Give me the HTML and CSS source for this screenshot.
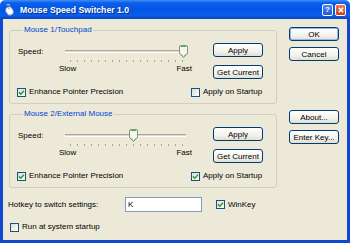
FILE: index.html
```html
<!DOCTYPE html>
<html lang="en">
<head>
  <meta charset="UTF-8">
  <title>Mouse Speed Switcher 1.0</title>
  <link rel="stylesheet" href="styles.css">
</head>
<body>
  <div class="window">
    <div class="titlebar">
      <svg class="app-icon" width="11" height="12" viewBox="0 0 11 12">
        <path d="M6 1 Q4 0 2.5 1" stroke="#dfe8ff" fill="none"/>
        <ellipse cx="5.5" cy="7" rx="3.6" ry="4.4" transform="rotate(-30 5.5 7)" fill="#ffffff" stroke="#6a7fa8" stroke-width="0.8"/>
        <path d="M4 4.2 L6.3 5.6" stroke="#8a9cc0" stroke-width="0.8"/>
      </svg>
      <span class="title">Mouse Speed Switcher 1.0</span>
      <div class="caption-btns">
        <span class="cap help">?</span>
        <span class="cap close">
          <svg width="6" height="6" viewBox="0 0 6 6"><path d="M0.8 0.8 L5.2 5.2 M5.2 0.8 L0.8 5.2" stroke="#fff" stroke-width="1.4"/></svg>
        </span>
      </div>
    </div>

    <div class="client">
      <div class="main">
        <div class="groups">
          <fieldset class="group">
            <legend>Mouse 1/Touchpad</legend>
            <div class="speed-row">
              <span class="speed-label">Speed:</span>
              <div class="slider">
                <div class="track">
                  <div class="thumb-range">
                    <span class="thumb" style="left: 100%">
                      <svg width="9" height="13" viewBox="0 0 9 13">
                        <path d="M0.5 1.5 Q0.5 0.5 1.5 0.5 H7.5 Q8.5 0.5 8.5 1.5 V8.5 L4.5 12.5 L0.5 8.5 Z" fill="#f5f4ee" stroke="#8e8e86"/>
                        <path d="M1.5 1.5 H7.5" stroke="#3cbf3c"/>
                        <path d="M1.5 8.8 L4.5 11.6 L7.5 8.8" stroke="#6fcf6f" fill="none"/>
                      </svg>
                    </span>
                  </div>
                </div>
                <div class="ticks"></div>
                <div class="scale"><span>Slow</span><span>Fast</span></div>
              </div>
              <div class="group-btns">
                <button class="btn">Apply</button>
                <button class="btn">Get Current</button>
              </div>
            </div>
            <div class="check-row">
              <label class="check first"><span class="box checked"><svg width="7" height="7" viewBox="0 0 7 7"><path d="M1 3.4 L2.8 5.2 L6 1.8" stroke="#21a121" stroke-width="1.5" fill="none"/></svg></span>Enhance Pointer Precision</label>
              <label class="check"><span class="box"></span>Apply on Startup</label>
            </div>
          </fieldset>

          <fieldset class="group second">
            <legend>Mouse 2/External Mouse</legend>
            <div class="speed-row">
              <span class="speed-label">Speed:</span>
              <div class="slider">
                <div class="track">
                  <div class="thumb-range">
                    <span class="thumb" style="left: 56.25%">
                      <svg width="9" height="13" viewBox="0 0 9 13">
                        <path d="M0.5 1.5 Q0.5 0.5 1.5 0.5 H7.5 Q8.5 0.5 8.5 1.5 V8.5 L4.5 12.5 L0.5 8.5 Z" fill="#f5f4ee" stroke="#8e8e86"/>
                        <path d="M1.5 1.5 H7.5" stroke="#3cbf3c"/>
                        <path d="M1.5 8.8 L4.5 11.6 L7.5 8.8" stroke="#6fcf6f" fill="none"/>
                      </svg>
                    </span>
                  </div>
                </div>
                <div class="ticks"></div>
                <div class="scale"><span>Slow</span><span>Fast</span></div>
              </div>
              <div class="group-btns">
                <button class="btn">Apply</button>
                <button class="btn">Get Current</button>
              </div>
            </div>
            <div class="check-row">
              <label class="check first"><span class="box checked"><svg width="7" height="7" viewBox="0 0 7 7"><path d="M1 3.4 L2.8 5.2 L6 1.8" stroke="#21a121" stroke-width="1.5" fill="none"/></svg></span>Enhance Pointer Precision</label>
              <label class="check"><span class="box checked"><svg width="7" height="7" viewBox="0 0 7 7"><path d="M1 3.4 L2.8 5.2 L6 1.8" stroke="#21a121" stroke-width="1.5" fill="none"/></svg></span>Apply on Startup</label>
            </div>
          </fieldset>
        </div>

        <div class="side-btns">
          <button class="btn default">OK</button>
          <button class="btn">Cancel</button>
          <button class="btn about">About...</button>
          <button class="btn">Enter Key...</button>
        </div>
      </div>

      <div class="hotkey-row">
        <span class="hotkey-label">Hotkey to switch settings:</span>
        <span class="textbox">K</span>
        <label class="check winkey"><span class="box checked"><svg width="7" height="7" viewBox="0 0 7 7"><path d="M1 3.4 L2.8 5.2 L6 1.8" stroke="#21a121" stroke-width="1.5" fill="none"/></svg></span>WinKey</label>
      </div>

      <label class="check run-startup"><span class="box"></span>Run at system startup</label>
    </div>
  </div>
</body>
</html>
```

FILE: styles.css
```css
* {
  box-sizing: border-box;
}

body {
  margin: 0;
  font-family: "Liberation Sans", Arial, sans-serif;
  font-size: 8px;
  background: #ffffff;
}

.window {
  width: 350px;
  height: 243px;
  display: flex;
  flex-direction: column;
}

/* title bar */
.titlebar {
  height: 19px;
  display: flex;
  align-items: center;
  padding: 0 4px 0 4px;
  border-radius: 5px 5px 0 0;
  background: linear-gradient(#3d8ffb 0, #0a5ee9 3px, #0256e6 50%, #0a5fe8 80%, #0845c8 100%);
  color: #ffffff;
}

.app-icon {
  display: block;
  margin-right: 5px;
}

.title {
  font-weight: bold;
  font-size: 8.7px;
  text-shadow: 1px 1px 0 #0a2f8a;
}

.caption-btns {
  margin-left: auto;
  display: flex;
  gap: 2px;
}

.cap {
  width: 11px;
  height: 12px;
  border: 1px solid #ffffff;
  border-radius: 2px;
  display: flex;
  align-items: center;
  justify-content: center;
  color: #ffffff;
  font-weight: bold;
  font-size: 8px;
}

.cap.help {
  background: linear-gradient(#4f8af2, #2457d8);
}

.cap.close {
  background: linear-gradient(#e77a5a, #c9401d);
}

/* client area */
.client {
  flex: 1;
  background: #ece9d8;
  border: 3px solid #1048d2;
  border-top: 0;
  padding: 6px 5px 0 6px;
}

.main {
  display: flex;
  gap: 12px;
}

.groups {
  width: 268px;
}

.group {
  margin: 0;
  min-width: 0;
  padding: 8px 13px 6px 8px;
  border: 1px solid #d0d0bf;
  border-radius: 3px;
}

.group.second {
  margin-top: 5px;
}

.group legend {
  padding: 0 1px;
  margin-left: 5px;
  line-height: 10px;
  color: #0046d5;
}

.speed-row {
  display: flex;
  align-items: flex-start;
}

.speed-label {
  width: 41px;
  margin-top: 4px;
  line-height: 10px;
}

/* slider */
.slider {
  width: 136px;
  padding-top: 7px;
}

.track {
  position: relative;
  margin: 0 9px 0 6px;
  height: 3px;
  border-top: 1px solid #a9a79c;
  border-bottom: 1px solid #ffffff;
  background: #dcdad0;
}

.thumb-range {
  position: absolute;
  left: 5px;
  right: 3px;
  top: -6px;
  height: 13px;
}

.thumb {
  position: absolute;
  top: 0;
  margin-left: -4.5px;
  width: 9px;
  height: 13px;
}

.thumb svg {
  display: block;
}

.ticks {
  margin: 7px 0 0 11px;
  width: 114px;
  height: 2px;
  background: repeating-linear-gradient(to right, #a7a59b 0 1px, transparent 1px 7px);
}

.scale {
  display: flex;
  justify-content: space-between;
  margin-top: 2px;
  padding-right: 3px;
  line-height: 10px;
}

/* buttons */
.group-btns {
  margin-left: 18px;
  display: flex;
  flex-direction: column;
  gap: 8px;
}

.btn {
  width: 50px;
  height: 14px;
  padding: 0;
  font-family: inherit;
  font-size: 8px;
  color: #000000;
  border: 1px solid #003c74;
  border-radius: 3px;
  background: linear-gradient(#ffffff, #f3f2ec 60%, #e2ded2);
}

.btn.default {
  box-shadow: inset 0 0 0 1px #98b4ec;
}

.side-btns {
  display: flex;
  flex-direction: column;
  padding-top: 2px;
  gap: 6px;
}

.side-btns .about {
  margin-top: 43px;
}

/* checkboxes */
.check-row {
  display: flex;
  margin-top: 8px;
}

.check {
  display: flex;
  align-items: center;
  gap: 3px;
  line-height: 10px;
}

.check.first {
  width: 174px;
  margin-left: -1px;
}

.box {
  width: 9px;
  height: 9px;
  border: 1px solid #1c5180;
  background: linear-gradient(135deg, #dcdcd5, #ffffff);
  display: flex;
  align-items: center;
  justify-content: center;
}

.box svg {
  display: block;
}

/* hotkey */
.hotkey-row {
  display: flex;
  align-items: center;
  margin-top: 9px;
}

.hotkey-label {
  width: 117px;
  margin-left: -1px;
}

.textbox {
  width: 77px;
  height: 15px;
  border: 1px solid #7f9db9;
  background: #ffffff;
  padding: 2px 0 0 2px;
  line-height: 10px;
}

.winkey {
  margin-left: 14px;
}

.run-startup {
  margin: 10px 0 0 1px;
}
```
